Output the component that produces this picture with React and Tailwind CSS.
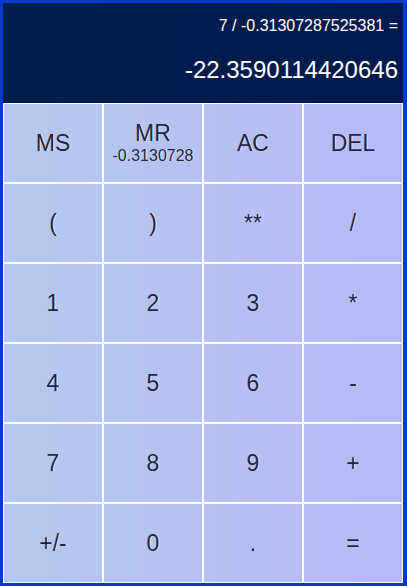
import React from 'react';

const rows = [
  ['MS', 'MR', 'AC', 'DEL'],
  ['(', ')', '**', '/'],
  ['1', '2', '3', '*'],
  ['4', '5', '6', '-'],
  ['7', '8', '9', '+'],
  ['+/-', '0', '.', '='],
];

const Key = ({ label, memory }) => (
  <button className="flex h-[80px] flex-col items-center justify-center border border-white bg-transparent text-[23px] leading-none text-[#1f2542] [text-shadow:1px_0_0_rgba(255,255,255,0.6)]">
    <span>{label}</span>
    {memory && <span className="mt-[3px] text-[16px] leading-none">{memory}</span>}
  </button>
);

const App = () => {
  return (
    <div className="h-[586px] w-[407px] border-[3px] border-r-4 border-[#0838d4] bg-[#0838d4] font-['Liberation_Sans',Arial,sans-serif]">
      {/* Display */}
      <div className="flex h-[100px] flex-col items-end bg-gradient-to-r from-[#021f4c] to-[#001a4e] pr-[5px] pt-[15px] text-white">
        <div className="text-[16px] leading-none">7 / -0.31307287525381 =</div>
        <div className="mt-[24px] text-[24px] leading-none">-22.3590114420646</div>
      </div>

      {/* Keypad */}
      <div className="grid grid-cols-4 bg-gradient-to-r from-[#b6c9ee] to-[#b5b9f5]">
        {rows.flat().map((k) => (
          <Key key={k} label={k} memory={k === 'MR' ? '-0.3130728' : null} />
        ))}
      </div>
    </div>
  );
};

export default App;
